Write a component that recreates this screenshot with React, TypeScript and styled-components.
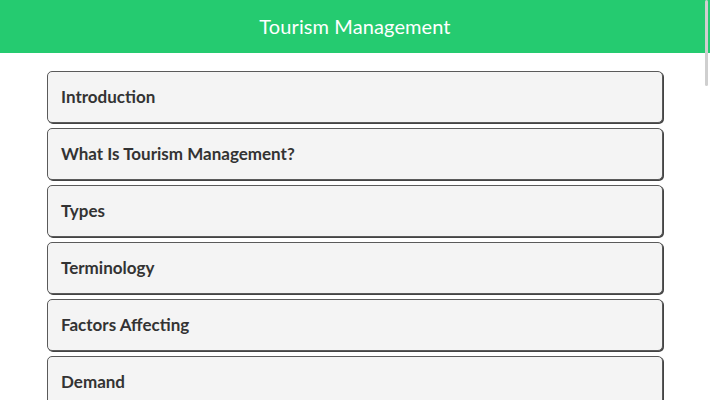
import React from "react";
import styled, { createGlobalStyle } from "styled-components";

const Global = createGlobalStyle`
  html, body { margin: 0; padding: 0; background: #ffffff; }
  body { font-family: "Lato", "Open Sans", sans-serif; overflow: hidden; }
`;

const Page = styled.div`
  width: 710px;
  min-height: 400px;
  display: flex;
  flex-direction: column;
`;

const Header = styled.header`
  height: 53px;
  box-sizing: border-box;
  padding-bottom: 2px;
  background: #25cb70;
  display: flex;
  align-items: center;
  justify-content: center;
`;

const Title = styled.h1`
  margin: 0;
  color: #ffffff;
  font-family: "Lato", sans-serif;
  font-weight: 400;
  font-size: 20px;
  letter-spacing: 0.1px;
`;

const List = styled.div`
  display: flex;
  flex-direction: column;
  gap: 5px;
  width: 616px;
  margin: 18px auto 0;
`;

const Item = styled.button`
  height: 52px;
  box-sizing: border-box;
  display: flex;
  align-items: center;
  padding: 0 13px 2px;
  background: #f4f4f4;
  border: 1px solid #5a5a5a;
  border-radius: 5px;
  box-shadow: 1px 1px 0 #444;
  font-family: "Lato", sans-serif;
  font-weight: 700;
  font-size: 17px;
  color: #333333;
  text-align: left;
  cursor: pointer;
`;

const ScrollThumb = styled.div`
  position: fixed;
  top: 0;
  right: 2px;
  width: 3px;
  height: 86px;
  background: #cfcfcf;
  border-radius: 2px;
`;

const topics = [
  "Introduction",
  "What Is Tourism Management?",
  "Types",
  "Terminology",
  "Factors Affecting",
  "Demand",
];

export default function App() {
  return (
    <Page>
      <Global />
      <Header>
        <Title>Tourism Management</Title>
      </Header>
      <List>
        {topics.map((t) => (
          <Item key={t}>{t}</Item>
        ))}
      </List>
      <ScrollThumb />
    </Page>
  );
}
